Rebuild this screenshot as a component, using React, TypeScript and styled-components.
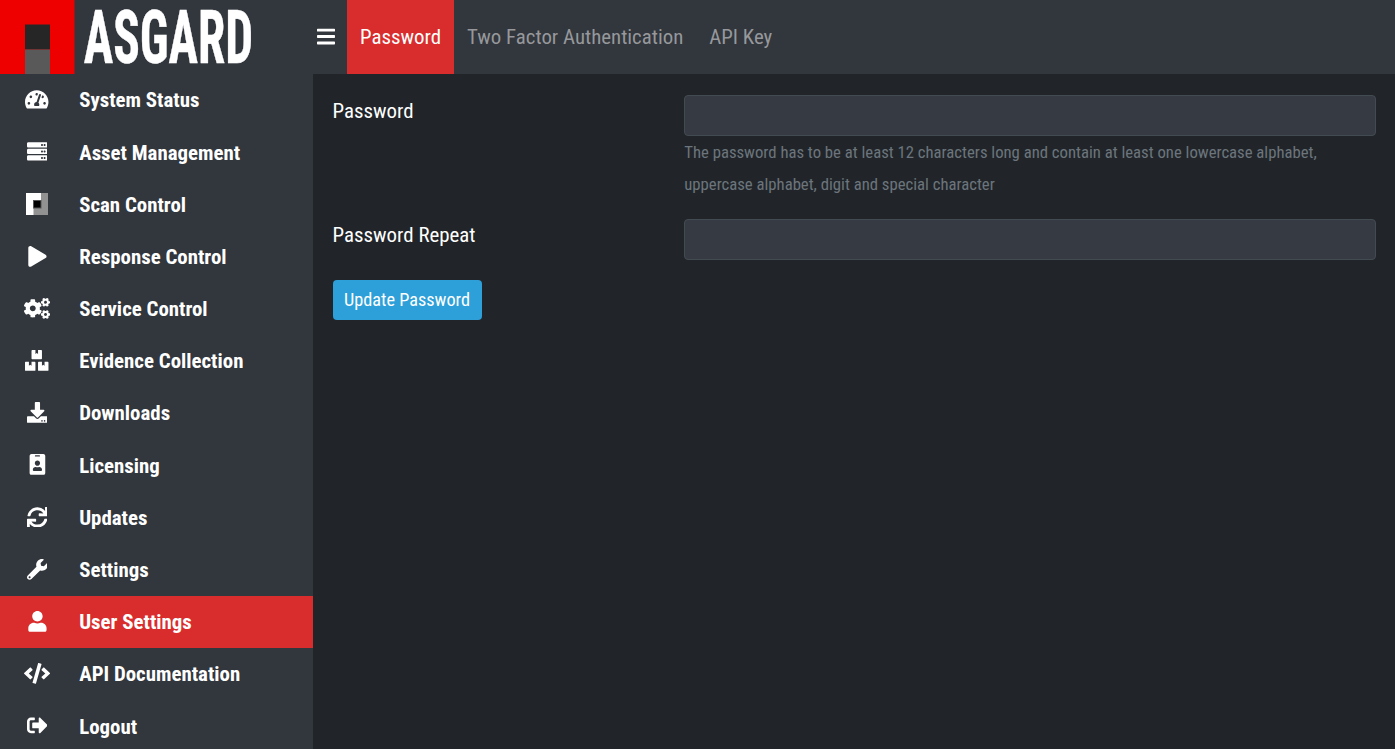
import React from "react";
import styled, { createGlobalStyle } from "styled-components";
import {
  FaBars, FaTachometerAlt, FaServer, FaPlay, FaCogs, FaBoxes, FaDownload,
  FaIdBadge, FaSync, FaWrench, FaUser, FaCode, FaSignOutAlt,
} from "react-icons/fa";

const GlobalStyle = createGlobalStyle`
  *, *::before, *::after { box-sizing: border-box; }
  html { font-size: 20.86px; }
  body {
    margin: 0;
    overflow: hidden;
    background: #212529;
    color: #fff;
    font-family: "Roboto Condensed", Roboto, sans-serif;
    font-stretch: 75%;
    font-size: 1rem;
    line-height: 1.5;
  }
`;

const Layout = styled.div`
  display: grid;
  grid-template-columns: 313px 1fr;
  height: 749px;
  overflow: hidden;
`;

const Sidebar = styled.aside`
  background: #32363d;
`;

const Brand = styled.div`
  height: 74px;
  svg { display: block; overflow: visible; }
`;

const Nav = styled.nav`
  display: flex;
  flex-direction: column;
`;

const NavItem = styled.a<{ $active?: boolean }>`
  display: flex;
  flex: none;
  align-items: center;
  height: 52.18px;
  color: #fff;
  font-weight: 700;
  text-decoration: none;
  background: ${(p) => (p.$active ? "#d92c2c" : "transparent")};
`;

const NavText = styled.span`
  padding-top: 2px;
`;

const NavIcon = styled.span<{ $width?: number }>`
  display: flex;
  flex: none;
  justify-content: center;
  width: 74px;
  margin-right: 5.2px;
  padding-bottom: 1px;
  svg {
    display: block;
    flex: none;
    height: ${(p) => (p.$width === 22 ? 22 : 20.86)}px;
    width: ${(p) => p.$width ?? 20.86}px;
  }
`;

const Main = styled.main`
  min-width: 0;
`;

const TopBar = styled.header`
  display: flex;
  height: 74px;
  background: #32363d;
`;

const MenuButton = styled.button`
  display: flex;
  align-items: center;
  justify-content: flex-start;
  width: 34px;
  padding: 0 0 1px 4px;
  border: 0;
  background: none;
  color: #fff;
  svg { height: 21px; width: 18px; }
`;

const Tab = styled.a<{ $active?: boolean }>`
  display: flex;
  align-items: center;
  padding: 2px 13px 0;
  color: ${(p) => (p.$active ? "#fff" : "#96989b")};
  background: ${(p) => (p.$active ? "#d92c2c" : "transparent")};
  text-decoration: none;
  white-space: nowrap;
`;

const Form = styled.form`
  padding: 21px 19px 0 19.6px;
`;

const Field = styled.div`
  display: grid;
  grid-template-columns: 351.4px 1fr;
  margin-bottom: 20px;
`;

const FieldLabel = styled.label`
  padding-top: 1px;
  color: #fff;
`;

const Input = styled.input`
  display: block;
  width: 100%;
  height: 41px;
  border: 1px solid #434b52;
  border-radius: 4px;
  background: #363a43;
  color: #fff;
  outline: none;
`;

const Hint = styled.div`
  height: 63px;
  padding: 1px 0 0 0.3px;
  color: #6c757d;
  font-size: 16.69px;
  line-height: 31.5px;
`;

const SubmitButton = styled.button`
  display: block;
  width: 149px;
  height: 40px;
  margin-left: 0.4px;
  padding: 0 0 0 11px;
  border: 0;
  border-radius: 4px;
  background: #2d9fd9;
  color: #fff;
  font: inherit;
  font-stretch: 75%;
  font-size: 18.25px;
  text-align: left;
  white-space: nowrap;
`;

function AsgardLogo() {
  return (
    <svg width="260" height="74" viewBox="0 0 260 74">
      <rect width="74.5" height="74" fill="#ee0000" />
      <rect x="25" y="24.5" width="25" height="25" fill="#262626" />
      <rect x="25" y="49.5" width="25" height="24.5" fill="#595959" />
      <text
        x="83.7" y="63.4" fill="#fff" stroke="#fff" strokeWidth="0.5"
        fontSize="75" fontWeight="700"
        textLength="169.5" lengthAdjust="spacingAndGlyphs"
      >
        ASGARD
      </text>
    </svg>
  );
}

function ScanIcon() {
  return (
    <svg viewBox="0 0 22 22">
      <rect width="22" height="22" fill="#fff" />
      <path d="M15 0h7v22H7.5V7H15z" fill="#929292" />
      <rect x="7" y="7" width="8.5" height="8.5" fill="#555" />
      <rect x="8" y="8" width="6.5" height="6.5" fill="#000" />
    </svg>
  );
}

const items: { label: string; icon: React.ReactNode; width?: number; active?: boolean }[] = [
  { label: "System Status", icon: <FaTachometerAlt />, width: 23.47 },
  { label: "Asset Management", icon: <FaServer /> },
  { label: "Scan Control", icon: <ScanIcon />, width: 22 },
  { label: "Response Control", icon: <FaPlay /> },
  { label: "Service Control", icon: <FaCogs />, width: 26.08 },
  { label: "Evidence Collection", icon: <FaBoxes />, width: 23.47 },
  { label: "Downloads", icon: <FaDownload /> },
  { label: "Licensing", icon: <FaIdBadge /> },
  { label: "Updates", icon: <FaSync /> },
  { label: "Settings", icon: <FaWrench /> },
  { label: "User Settings", icon: <FaUser />, active: true },
  { label: "API Documentation", icon: <FaCode />, width: 26.08 },
  { label: "Logout", icon: <FaSignOutAlt /> },
];

export default function App() {
  return (
    <>
      <GlobalStyle />
      <Layout>
        <Sidebar>
          <Brand><AsgardLogo /></Brand>
          <Nav>
            {items.map((item) => (
              <NavItem key={item.label} $active={item.active}>
                <NavIcon $width={item.width}>{item.icon}</NavIcon>
                <NavText>{item.label}</NavText>
              </NavItem>
            ))}
          </Nav>
        </Sidebar>
        <Main>
          <TopBar>
            <MenuButton type="button" aria-label="Menu"><FaBars /></MenuButton>
            <Tab $active>Password</Tab>
            <Tab>Two Factor Authentication</Tab>
            <Tab>API Key</Tab>
          </TopBar>
          <Form>
            <Field>
              <FieldLabel htmlFor="password">Password</FieldLabel>
              <div>
                <Input id="password" type="password" />
                <Hint>
                  The password has to be at least 12 characters long and contain at least one lowercase alphabet,
                  uppercase alphabet, digit and special character
                </Hint>
              </div>
            </Field>
            <Field>
              <FieldLabel htmlFor="repeat">Password Repeat</FieldLabel>
              <Input id="repeat" type="password" />
            </Field>
            <SubmitButton type="button">Update Password</SubmitButton>
          </Form>
        </Main>
      </Layout>
    </>
  );
}
